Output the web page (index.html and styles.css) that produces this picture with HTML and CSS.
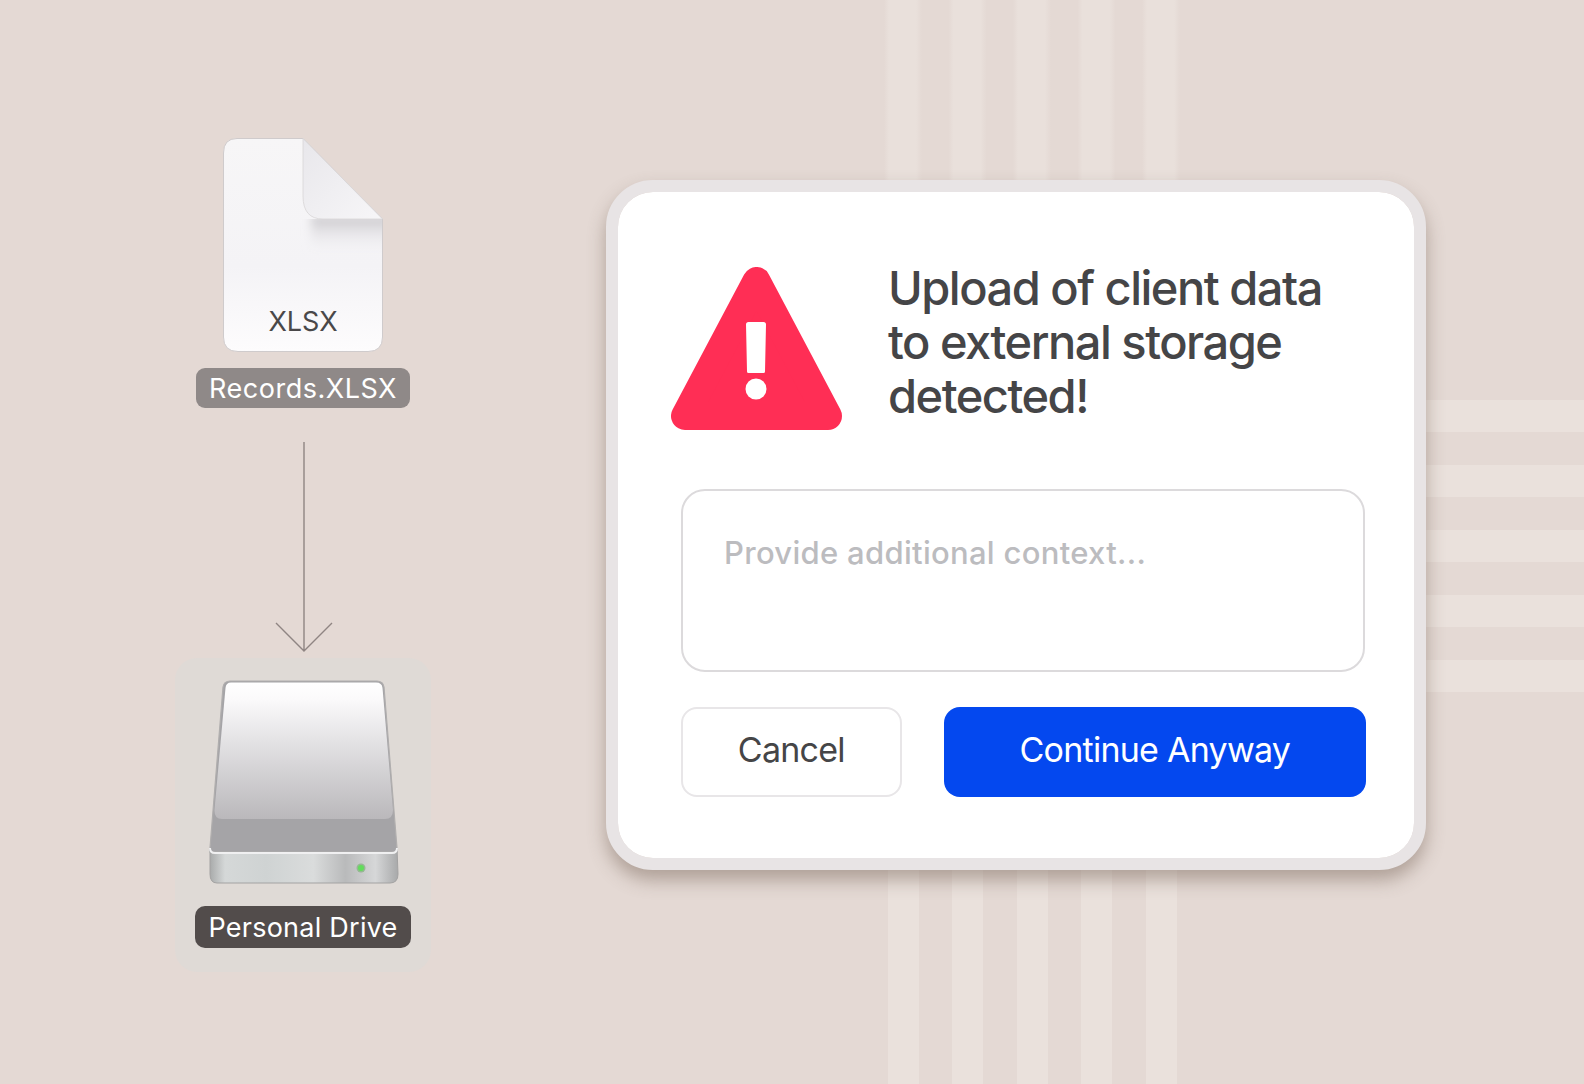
FILE: index.html
```html
<!DOCTYPE html>
<html>
<head>
	<meta charset="UTF-8">
	<title>Upload warning</title>
	<link rel="stylesheet" href="styles.css">
</head>
<body>
<div class="stage">
	<div class="stripes-top"></div>
	<div class="stripes-bottom"></div>
	<div class="stripes-h"></div>

	<div class="flow">
		<svg class="file-icon" width="160" height="214" viewBox="0 0 160 214">
			<defs>
				<linearGradient id="pageFill" x1="0" y1="0" x2="0" y2="1">
					<stop offset="0" stop-color="#f7f6f7"/>
					<stop offset="0.6" stop-color="#f4f3f6"/>
					<stop offset="1" stop-color="#fdfcfd"/>
				</linearGradient>
				<linearGradient id="foldFill" x1="0" y1="0" x2="1" y2="1">
					<stop offset="0" stop-color="#e8e7eb"/>
					<stop offset="1" stop-color="#f7f6f8"/>
				</linearGradient>
				<linearGradient id="foldShadow" x1="0" y1="0" x2="0" y2="1">
					<stop offset="0" stop-color="#bdbbbf" stop-opacity="0.85"/>
					<stop offset="0.35" stop-color="#cfcdd1" stop-opacity="0.5"/>
					<stop offset="1" stop-color="#f4f3f6" stop-opacity="0"/>
				</linearGradient>
				<clipPath id="pageClip">
					<path d="M0 81H159V160H0Z"/>
				</clipPath>
				<filter id="soft" x="-30%" y="-30%" width="160%" height="160%">
					<feGaussianBlur stdDeviation="5"/>
				</filter>
			</defs>
			<path d="M14 .5H80L159.500 81V199Q159.500 213.500 145 213.500H15Q.5 213.500 .5 199V15Q.5 .5 14 .5Z" fill="url(#pageFill)" stroke="#cfcbcc"/>
			<g clip-path="url(#pageClip)">
				<path d="M88 78H168V116H88Z" fill="url(#foldShadow)" filter="url(#soft)"/>
			</g>
			<path d="M80 .5L159.500 81H100Q80 81 80 58Z" fill="url(#foldFill)" stroke="#d8d5d7" stroke-width=".8"/>
			<text class="file-ext" x="80" y="193" text-anchor="middle">XLSX</text>
		</svg>
		<div class="tag tag-file">Records.XLSX</div>

		<svg class="arrow" width="60" height="212" viewBox="0 0 60 212">
			<path d="M30 0V209M2 181L30 209L58 181" fill="none" stroke="#8f8583" stroke-width="1.400"/>
		</svg>

		<div class="drive-box">
			<svg class="drive-icon" width="194" height="208" viewBox="0 0 194 208">
				<defs>
					<linearGradient id="panelFill" x1="0" y1="0" x2="0" y2="1">
						<stop offset="0" stop-color="#ffffff"/>
						<stop offset="0.12" stop-color="#fbfafb"/>
						<stop offset="0.45" stop-color="#e2e1e3"/>
						<stop offset="1" stop-color="#bab8bb"/>
					</linearGradient>
					<linearGradient id="frontFill" x1="0" y1="0" x2="1" y2="0">
						<stop offset="0" stop-color="#a9abab"/>
						<stop offset="0.08" stop-color="#d5d8d8"/>
						<stop offset="0.3" stop-color="#cfd3d3"/>
						<stop offset="0.55" stop-color="#dadcdc"/>
						<stop offset="0.72" stop-color="#b9babb"/>
						<stop offset="0.88" stop-color="#d6d7d8"/>
						<stop offset="1" stop-color="#a8a9aa"/>
					</linearGradient>
				</defs>
				<path d="M23 1H170Q176 1 177 7L190 168V172H3V168L16 7Q17 1 23 1Z" fill="#a5a4a7" stroke="#b0aeae" stroke-width="1.200"/>
				<path d="M24 2.500H169Q175 2.500 175.500 8L186 130Q186 139 178 139H15Q7 139 7.500 130L18.500 8Q19 2.500 24 2.500Z" fill="url(#panelFill)"/>
				<path d="M3 168Q3 173 8 173H185Q190 173 190 168L191 194Q191 203 183 203H10Q3 203 3 194Z" fill="url(#frontFill)" stroke="#a3a2a2"/>
				<path d="M3 168Q3 173 8 173H185Q190 173 190 168" fill="none" stroke="#f0f0f1" stroke-width="2"/>
				<circle cx="154" cy="188" r="4.500" fill="#96b793"/>
				<circle cx="154" cy="188" r="3" fill="#62dc5c"/>
			</svg>
			<div class="tag tag-drive">Personal Drive</div>
		</div>
	</div>

	<div class="card">
		<div class="card-head">
			<svg class="warn-icon" width="171" height="163" viewBox="0 0 171 163">
				<path d="M85.500 14L14 149H157Z" fill="#ff2e55" stroke="#ff2e55" stroke-width="28" stroke-linejoin="round"/>
				<path d="M75 57.500Q75 55 77.500 55H92.500Q95 55 95 57.500L94 104.500Q94 106 92.500 106H77.500Q76 106 76 104.500Z" fill="#fff"/>
				<circle cx="85" cy="122" r="10.500" fill="#fff"/>
			</svg>
			<h1 class="title">Upload of client data to external storage detected!</h1>
		</div>
		<div class="context">Provide additional context...</div>
		<div class="actions">
			<div class="btn btn-cancel">Cancel</div>
			<div class="btn btn-go">Continue Anyway</div>
		</div>
	</div>
</div>
</body>
</html>
```

FILE: styles.css
```css
* {
	margin: 0;
	padding: 0;
	box-sizing: border-box;
}
body {
	width: 1584px;
	height: 1084px;
	overflow: hidden;
	background: #e4d9d4;
	font-family: Inter, "Liberation Sans", sans-serif;
}
.stage {
	position: relative;
	width: 1584px;
	height: 1084px;
	display: flex;
	align-items: flex-start;
	padding-left: 176px;
	gap: 176px;
}

/* background bands */
.stripes-top {
	position: absolute;
	left: 884px;
	top: 0;
	width: 300px;
	height: 190px;
	background: repeating-linear-gradient(90deg, transparent 0, #e9e0db 5px, #e9e0db 32px, transparent 38px, transparent 64.500px);
}
.stripes-bottom {
	position: absolute;
	left: 888px;
	top: 860px;
	width: 291px;
	height: 224px;
	background: repeating-linear-gradient(90deg, #eae1dc 0 31px, transparent 31px 64.500px);
}
.stripes-h {
	position: absolute;
	left: 1425px;
	top: 400px;
	width: 159px;
	height: 296px;
	background: repeating-linear-gradient(180deg, #eae1dc 0 32px, transparent 32px 65px);
}

/* left column */
.flow {
	position: relative;
	width: 254px;
	padding-top: 138px;
	display: flex;
	flex-direction: column;
	align-items: center;
}
.file-icon {
	display: block;
}
.file-ext {
	font: 400 27px Inter, "Liberation Sans", sans-serif;
	fill: #4a4849;
}
.tag {
	display: flex;
	align-items: center;
	justify-content: center;
	width: 216px;
	border-radius: 9px;
	color: #fff;
	font-size: 27px;
	line-height: 1;
}
.tag-file {
	margin-top: 16px;
	height: 40px;
	width: 214px;
	background: #8f8988;
	letter-spacing: 0.500px;
}
.arrow {
	display: block;
	margin-top: 34px;
	margin-left: 2px;
}
.drive-box {
	margin-top: 4px;
	width: 256px;
	height: 314px;
	padding-top: 22px;
	border-radius: 22px;
	background: #dfdad6;
	display: flex;
	flex-direction: column;
	align-items: center;
}
.drive-icon {
	display: block;
	margin-left: 1px;
}
.tag-drive {
	margin-top: 18px;
	height: 42px;
	background: #524c4b;
	border-radius: 10px;
	letter-spacing: 0.250px;
}

/* dialog */
.card {
	position: relative;
	margin-top: 180px;
	width: 820px;
	height: 690px;
	padding: 75px 48px 0 63px;
	background: #fff;
	border: 12px solid #e8e4e5;
	border-radius: 47px;
	background-clip: padding-box;
	box-shadow: 0 10px 18px rgba(110, 90, 78, 0.45);
}
.card-head {
	display: flex;
	align-items: flex-start;
	gap: 46px;
	margin-left: -10px;
	height: 162px;
}
.warn-icon {
	display: block;
	flex: none;
}
.title {
	margin-top: -6px;
	font-size: 47px;
	font-weight: 500;
	line-height: 54px;
	letter-spacing: -1.500px;
	color: #454547;
	width: 470px;
}
.context {
	margin-top: 60px;
	width: 684px;
	height: 183px;
	padding: 42px 41px 0;
	border: 2px solid #dcdadc;
	border-radius: 24px;
	font-size: 31px;
	font-weight: 500;
	letter-spacing: 0.300px;
	line-height: 40px;
	color: #bcbcbf;
}
.actions {
	margin-top: 35px;
	display: flex;
	gap: 42px;
}
.btn {
	height: 90px;
	padding-bottom: 6px;
	display: flex;
	align-items: center;
	justify-content: center;
	font-size: 34px;
	letter-spacing: -0.750px;
	border-radius: 16px;
}
.btn-cancel {
	width: 221px;
	border: 2px solid #e8e6e8;
	color: #454547;
}
.btn-go {
	width: 423px;
	background: #0448ef;
	color: #fff;
}
```
